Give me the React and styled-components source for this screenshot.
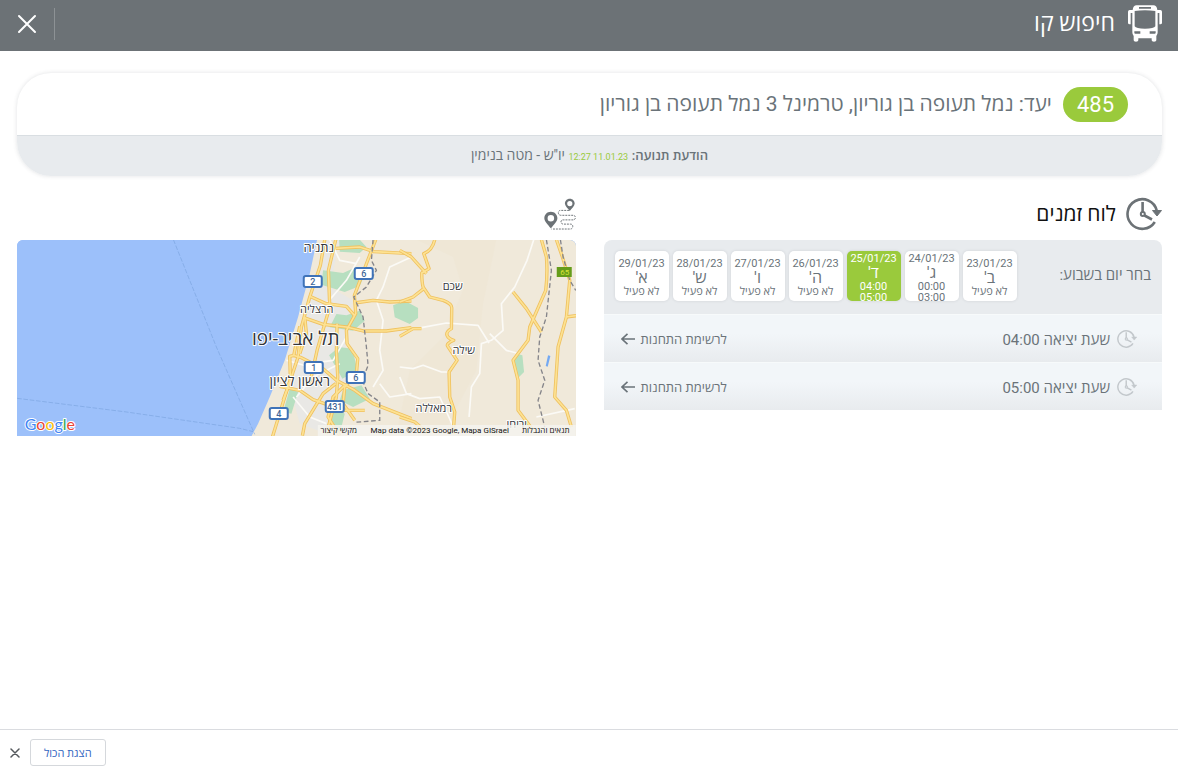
import React from 'react';
import styled, { createGlobalStyle } from 'styled-components';

const GlobalStyle = createGlobalStyle`
  *, *::before, *::after { box-sizing: border-box; }
  body {
    margin: 0;
    background: #fff;
    color: #6a7379;
    font-family: Roboto, "Open Sans", "Liberation Sans", sans-serif;
  }
  button { font-family: inherit; color: inherit; cursor: pointer; }
  h1, h2, p, ul { margin: 0; padding: 0; font-weight: 400; }
  svg { display: block; }
`;

const Page = styled.div`
  min-height: 100vh;
  display: flex;
  flex-direction: column;
`;

const TopBar = styled.header`
  display: flex;
  align-items: center;
  justify-content: space-between;
  height: 51px;
  padding: 0 16px 0 17px;
  background: #6c7276;
  color: #fff;
`;

const TopTitle = styled.div`
  display: flex;
  align-items: center;
  gap: 13px;
  padding-bottom: 4px;
  h1 { font-size: 23px; line-height: 28px; }
`;

const TopActions = styled.div`
  display: flex;
  align-items: center;
  padding-bottom: 4px;
`;

const Divider = styled.span`
  width: 1px;
  height: 32px;
  margin-left: 17px;
  background: #8d9295;
`;

const CloseButton = styled.button`
  padding: 0;
  border: 0;
  background: none;
`;

const Main = styled.main`
  flex: 1;
  padding: 22px 16px 22px 17px;
`;

const LineCard = styled.section`
  overflow: hidden;
  border-radius: 34px;
  box-shadow: 0 0 4px rgba(60, 70, 80, 0.16);
`;

const Destination = styled.div`
  display: flex;
  align-items: center;
  gap: 11px;
  height: 62px;
  padding: 0 34px;
  font-size: 21px;
  line-height: 30px;
`;

const LineNumber = styled.span`
  padding: 0 14px;
  border-radius: 18px;
  background: #9aca3c;
  color: #fff;
  font-size: 22px;
  line-height: 35px;
`;

const Notice = styled.p`
  padding: 10px;
  border-top: 1px solid #d9dee2;
  background: #e8ebee;
  font-size: 14px;
  line-height: 18px;
  text-align: center;
  b { font-size: 13px; font-weight: 600; }
  time { color: #9aca3c; font-size: 9px; }
`;

const Columns = styled.div`
  display: grid;
  grid-template-columns: 1fr 1fr;
  gap: 28px;
  padding-top: 14px;
`;

const ColumnHead = styled.div`
  display: flex;
  align-items: center;
  gap: 10px;
  height: 50px;
  padding-bottom: 2px;
  color: #111;
  h2 { font-size: 21px; line-height: 28px; }
`;

const DayPicker = styled.div`
  display: flex;
  align-items: flex-start;
  justify-content: space-between;
  height: 74px;
  padding: 11px;
  border-radius: 8px 8px 0 0;
  background: #e8ebee;
  font-size: 15px;
  line-height: 48px;
`;

const Days = styled.div`
  display: flex;
  gap: 4px;
`;

const DayTile = styled.button`
  display: flex;
  flex-direction: column;
  align-items: center;
  justify-content: safe center;
  width: 54px;
  height: 50px;
  padding: 2px 0 0;
  overflow: hidden;
  border: 0;
  border-radius: 5px;
  background: ${(p) => (p.$active ? '#9aca3c' : '#fff')};
  color: ${(p) => (p.$active ? '#fff' : '#6a7379')};
  box-shadow: 0 0 3px rgba(60, 70, 80, 0.15);
  font-size: 11px;
  line-height: 11px;
  span { flex: none; }
`;

const DayDate = styled.span`
  line-height: 12px;
`;

const DayLetter = styled.span`
  font-size: 16px;
  line-height: 16px;
`;

const Departures = styled.ul`
  list-style: none;
`;

const Departure = styled.li`
  display: flex;
  align-items: center;
  justify-content: space-between;
  height: 48px;
  padding: 0 25px 0 17px;
  border-top: 1px solid #f7fafb;
  background: linear-gradient(#f2f6f9 40%, #e8ebee);
`;

const DepartureTime = styled.span`
  display: flex;
  align-items: center;
  gap: 7px;
  font-size: 15px;
`;

const StopsLink = styled.a`
  display: flex;
  align-items: center;
  gap: 6px;
  color: inherit;
  font-size: 13px;
  text-decoration: none;
`;

const MapFrame = styled.div`
  height: 196px;
  overflow: hidden;
  border-radius: 6px 6px 0 0;
  background: #9cc0fa;
  direction: ltr;
`;

const MapLabel = styled.text`
  fill: ${(p) => p.$fill || '#33363a'};
  stroke: ${(p) => (p.$halo === false ? 'none' : '#fff')};
  stroke-width: 2px;
  paint-order: stroke;
  stroke-linejoin: round;
  font-size: ${(p) => p.$size || 11}px;
  font-weight: ${(p) => p.$weight || 400};
  text-anchor: middle;
  direction: rtl;
`;

const MapMark = styled(MapLabel)`
  direction: ltr;
  text-anchor: start;
  font-family: Lato, "Open Sans", sans-serif;
`;

const BottomBar = styled.footer`
  display: flex;
  align-items: center;
  justify-content: flex-end;
  gap: 10px;
  height: 44px;
  padding: 2px 10px 0;
  border-top: 1px solid #dadce0;
`;

const ShowAll = styled.button`
  height: 27px;
  padding: 0 13px;
  border: 1px solid #d5d8dc;
  border-radius: 3px;
  background: #fff;
  color: #2f64c0;
  font-size: 11px;
`;

function BusIcon() {
  return (
    <svg width="34" height="37" viewBox="444 16 102 111" aria-hidden="true">
      <path fill="#fff" d="M470 17h50q11 0 12 14h9q5 0 5 5v33q0 5-5 5h-3V40h-5v58q0 7-4 11v13q0 4-7 4t-7-4v-6h-40v6q0 4-7 4t-7-4v-13q-4-4-4-11V40h-5v34h-3q-5 0-5-5V36q0-5 5-5h9q1-14 12-14z" />
      <path fill="#6c7276" d="M477 22h36v5h-36zM464 34q31-5 62 0v46q-4 7-31 7t-31-7zM463 95h18v7h-15q-3 0-3-3zM509 95h18v4q0 3-3 3h-15z" />
    </svg>
  );
}

function ClockIcon({ size, color }) {
  return (
    <svg width={size} height={size} viewBox="0 0 36 36" fill="none" stroke={color} strokeWidth="2.6" aria-hidden="true">
      <path d="M30.700 14.500A14.800 14.800 0 1 0 28.800 26" />
      <path d="M16.600 6v10M18.500 19.500l7.500 4" />
      <circle cx="16.800" cy="18" r="2" strokeWidth="2" />
      <path d="M26.500 14.500h9l-4.500 5.500z" fill={color} strokeWidth="1" />
    </svg>
  );
}

function RouteIcon() {
  return (
    <svg width="32" height="32" viewBox="41 20 98 98" aria-hidden="true">
      <g fill="#6c7276" fillRule="evenodd">
        <path d="M62 62c12 0 20 9 20 20 0 10-12 21-20 31-8-10-20-21-20-31 0-11 8-20 20-20zm0 10a10 10 0 1 0 0 20 10 10 0 0 0 0-20z" />
        <path d="M120 22c9 0 15 7 15 15 0 7-9 15-15 23-6-8-15-16-15-23 0-8 6-15 15-15zm0 7a8 8 0 1 0 0 16 8 8 0 0 0 0-16z" />
      </g>
      <path d="M118 58H92q-7 0-7 7t7 8h38q7 0 7 7t-7 7h-30q-7 0-7 6t7 7h22q7 0 7 7t-7 8H64" fill="none" stroke="#6c7276" strokeWidth="3" strokeDasharray="6 3" />
    </svg>
  );
}

function CloseIcon({ size, color, width }) {
  return (
    <svg width={size} height={size} viewBox="0 0 20 20" fill="none" stroke={color} strokeWidth={width} strokeLinecap="round" aria-hidden="true">
      <path d="M2 2l16 16M18 2L2 18" />
    </svg>
  );
}

function ArrowIcon() {
  return (
    <svg width="14" height="12" viewBox="0 0 14 12" fill="none" stroke="#6a7379" strokeWidth="1.6" aria-hidden="true">
      <path d="M14 6H1M6.500 0.800L1 6l5.500 5.200" />
    </svg>
  );
}

const majorRoads = [
  'M285 8L272 85 240 180 215 270 205 360 165 480 128 600',
  'M318 8L296 100 300 210 262 340 240 440',
  'M438 8L412 75 374 175 378 230 350 280 352 320 384 365 380 410 345 450 340 500 375 550',
  'M318 34L390 30 432 44 545 50',
  'M240 178L290 200 350 208 374 235',
  'M222 242L280 262 350 270 400 282 470 282 545 272',
  'M374 198L430 190 480 195 545 192',
  'M210 268L192 355 180 358 182 430 160 490',
  'M190 355L215 362 280 395 320 430 375 460 430 500 545 545',
  'M322 260L320 340 324 420 320 480 290 590',
  'M150 448L210 460 250 488 290 502 345 520 405 520',
  'M318 440L280 470 225 560 218 596',
  'M345 445L310 480 295 540 330 596',
  'M225 240L230 290 210 350',
];

const eastRoads = [
  'M105 8Q98 40 72 50L88 95 66 108Q66 135 70 150L90 180 130 190Q156 200 156 212L155 275Q138 285 142 295T162 310Q138 320 144 328L172 370 148 405 150 480 165 525 160 590',
  'M0 40L35 60 80 110M0 195L40 180 72 155M0 298L40 275 65 275',
  'M425 8L440 60Q444 110 438 160L390 270 385 310 340 370 355 430 355 520 400 580',
  'M340 165L380 215 425 285',
  'M470 8L488 60 510 130 500 240 475 330 465 480 500 520 515 570',
  'M498 240L530 236M0 540L45 555 80 585',
];

const minorRoads = [
  'M545 60L480 90 460 150 440 190 460 250 450 340 460 400 430 450M290 200L350 130 390 60',
  'M545 470L480 480 450 440M190 480L240 540 290 560M240 380L310 370 350 300',
  'M300 8L330 70 380 80M170 370L240 390M200 480L250 420 330 380',
];

const eastMinorRoads = [
  'M402 8L382 70 345 150 305 200 310 280 275 310 245 320 240 410 215 450 208 540',
  'M65 272L140 258 235 265 268 318M270 290L320 340 350 348',
  'M0 390L40 395 70 385 125 405 145 405M0 420L20 470 60 485 120 480 170 590M410 540L525 515',
];

const shields = [
  { x: 296, y: 44, n: '2' },
  { x: 347, y: 36, n: '6' },
  { x: 297, y: 130, n: '1' },
  { x: 339, y: 140, n: '6' },
  { x: 318, y: 169, n: '431' },
  { x: 262, y: 176, n: '4' },
];

function RoadSet({ transform, major, minor }) {
  return (
    <g transform={transform} fill="none" strokeLinejoin="round">
      {minor.map((d) => <path key={d} d={d} stroke="#fbfaf6" strokeWidth="5" />)}
      {major.map((d) => <path key={d} d={d} stroke="#efc15f" strokeWidth="10" />)}
      {major.map((d) => <path key={d} d={d} stroke="#fde293" strokeWidth="5" />)}
    </g>
  );
}

function AreaMap() {
  return (
    <svg width="100%" height="100%" viewBox="0 0 559 196" preserveAspectRatio="xMidYMid slice" role="img" aria-label="מפה">
      <rect width="559" height="196" fill="#9cc0fa" />
      <g transform="translate(213 -3) scale(.3333)">
        <path fill="#f0e9da" d="M262 8L240 110 205 240 165 370 120 480 85 560 64 600H1060V8z" />
        <path fill="#e9e8e5" d="M285 8L260 120 225 230 205 330 180 450 210 560 290 590 345 440 350 250 370 190 300 150 330 8z" />
        <path fill="#efe7d6" d="M560 8L670 60 700 160 640 300 540 400 500 590H640L740 400 760 200 800 8z" />
        <g fill="#b7dfc0">
          <path d="M280 100l60 8 40-18 30 12-20 45-45 18-70-22zM328 8h62l20 22-20 18-60-4z" />
          <path d="M490 205l35-14 40 22v30l-25 18-45-20zM350 235l40-14 15 30-35 30-70-10 20-40z" />
          <path d="M328 330l40 5 15 65-45 25-40-70zM340 460l55-15 25 40-50 25-40-20zM180 455l25 10-20 65-25-5zM300 500l45 30-15 60-30-30z" />
          <path d="M860 350l18 5 5 50-15 15-18-35z" />
        </g>
        <path fill="#74a9f2" d="M955 355l7 2-8 32-6-2z" />
      </g>
      <g transform="translate(-7 -3) scale(.3333)" fill="none" stroke="#7ba4df" strokeWidth="2" strokeDasharray="14 5">
        <path d="M491 8L560 180 620 330 690 490 735 592M22 484L350 525 690 574 730 584" />
      </g>
      <RoadSet transform="translate(213 -3) scale(.3333)" major={majorRoads} minor={minorRoads} />
      <RoadSet transform="translate(383 -3) scale(.3333)" major={eastRoads} minor={eastMinorRoads} />
      <g fill="none" stroke="#85858a" strokeWidth="4" strokeDasharray="14 8">
        <path transform="translate(213 -3) scale(.3333)" d="M430 8L425 70 440 100 410 150 372 180 400 240 410 330 415 385 398 430 415 470 450 495 450 550 375 556" />
        <path transform="translate(383 -3) scale(.3333)" d="M440 8L455 100 440 240 420 300 415 370 435 430 415 490 435 570M482 8L490 60 510 130 528 160" />
      </g>
      {shields.map((s) => (
        <g key={`${s.x}-${s.y}`}>
          <rect x={s.x - 9} y={s.y - 8} width="18" height="11" rx="2" fill="#fff" stroke="#3f73b8" strokeWidth="2" />
          <MapLabel x={s.x} y={s.y + 1} $size={9} $weight={500} $fill="#3f6798" $halo={false}>{s.n}</MapLabel>
        </g>
      ))}
      <rect x="540" y="27" width="15" height="10" fill="#659c1b" />
      <MapLabel x="548" y="35" $size={8} $fill="#d8e23a" $halo={false}>65</MapLabel>
      <MapLabel x="302" y="12" $size={13}>נתניה</MapLabel>
      <MapLabel x="300" y="73" $size={11}>הרצליה</MapLabel>
      <MapLabel x="279" y="105" $size={19}>תל אביב-יפו</MapLabel>
      <MapLabel x="283" y="146" $size={14}>ראשון לציון</MapLabel>
      <MapLabel x="436" y="50">שכם</MapLabel>
      <MapLabel x="447" y="114">שילה</MapLabel>
      <MapLabel x="417" y="172">רמאללה</MapLabel>
      <MapLabel x="500" y="188">יריחו</MapLabel>
      <rect x="301" y="185" width="258" height="11" fill="#f5f3ee" fillOpacity=".85" />
      <MapLabel x="322" y="193" $size={8} $halo={false} $fill="#111">מקשי קיצור</MapLabel>
      <MapLabel x="423" y="193" $size={8} $halo={false} $fill="#111" direction="ltr">Map data ©2023 Google, Mapa GISrael</MapLabel>
      <MapLabel x="529" y="193" $size={8} $halo={false} $fill="#111">תנאים והגבלות</MapLabel>
      <MapMark x="8" y="190" $size={16}>
        <tspan fill="#4285f4">G</tspan>
        <tspan fill="#ea4335">o</tspan>
        <tspan fill="#fbbc05">o</tspan>
        <tspan fill="#4285f4">g</tspan>
        <tspan fill="#34a853">l</tspan>
        <tspan fill="#ea4335">e</tspan>
      </MapMark>
    </svg>
  );
}

const days = [
  { date: '23/01/23', letter: "ב'", lines: ['לא פעיל'] },
  { date: '24/01/23', letter: "ג'", lines: ['00:00', '03:00'] },
  { date: '25/01/23', letter: "ד'", lines: ['04:00', '05:00'], active: true },
  { date: '26/01/23', letter: "ה'", lines: ['לא פעיל'] },
  { date: '27/01/23', letter: "ו'", lines: ['לא פעיל'] },
  { date: '28/01/23', letter: "ש'", lines: ['לא פעיל'] },
  { date: '29/01/23', letter: "א'", lines: ['לא פעיל'] },
];

const departures = ['04:00', '05:00'];

export default function App() {
  return (
    <Page dir="rtl" lang="he">
      <GlobalStyle />
      <TopBar>
        <TopTitle>
          <BusIcon />
          <h1>חיפוש קו</h1>
        </TopTitle>
        <TopActions>
          <Divider />
          <CloseButton type="button" aria-label="סגירה">
            <CloseIcon size={20} color="#fff" width={2} />
          </CloseButton>
        </TopActions>
      </TopBar>

      <Main>
        <LineCard>
          <Destination>
            <LineNumber>485</LineNumber>
            <span>יעד: נמל תעופה בן גוריון, טרמינל 3 נמל תעופה בן גוריון</span>
          </Destination>
          <Notice>
            <b>הודעת תנועה:</b> <time>11.01.23 12:27</time> יו"ש - מטה בנימין
          </Notice>
        </LineCard>

        <Columns>
          <section>
            <ColumnHead>
              <ClockIcon size={36} color="#6c7276" />
              <h2>לוח זמנים</h2>
            </ColumnHead>
            <DayPicker>
              <span>בחר יום בשבוע:</span>
              <Days>
                {days.map((d) => (
                  <DayTile key={d.date} type="button" $active={d.active} aria-pressed={!!d.active}>
                    <DayDate>{d.date}</DayDate>
                    <DayLetter>{d.letter}</DayLetter>
                    {d.lines.map((l) => <span key={l}>{l}</span>)}
                  </DayTile>
                ))}
              </Days>
            </DayPicker>
            <Departures>
              {departures.map((t) => (
                <Departure key={t}>
                  <DepartureTime>
                    <ClockIcon size={20} color="#c3c8cc" />
                    <span>שעת יציאה {t}</span>
                  </DepartureTime>
                  <StopsLink href="#stops">
                    לרשימת התחנות
                    <ArrowIcon />
                  </StopsLink>
                </Departure>
              ))}
            </Departures>
          </section>

          <section>
            <ColumnHead>
              <RouteIcon />
            </ColumnHead>
            <MapFrame>
              <AreaMap />
            </MapFrame>
          </section>
        </Columns>
      </Main>

      <BottomBar>
        <ShowAll type="button">הצגת הכול</ShowAll>
        <CloseButton type="button" aria-label="סגירת הסרגל">
          <CloseIcon size={10} color="#55595d" width={3} />
        </CloseButton>
      </BottomBar>
    </Page>
  );
}
